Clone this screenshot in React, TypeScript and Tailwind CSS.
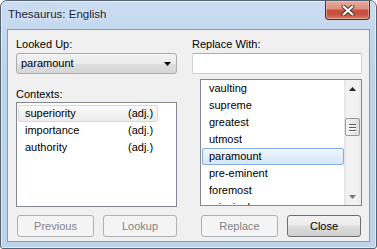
import React from "react";

function CloseButton() {
  return (
    <div className="flex h-[19px] w-[45px] items-center justify-center rounded-b-[4px] border border-t-0 border-[#5b2a22] bg-[linear-gradient(180deg,#e9ab9c_0%,#dc8f7c_45%,#c6503b_50%,#c8553f_75%,#d9826a_100%)] shadow-[inset_0_0_0_1px_rgba(255,210,200,0.45)]">
      <svg width="14" height="11" viewBox="0 0 14 11">
        <path d="M2.5 1.5 L11.5 9.5 M11.5 1.5 L2.5 9.5" stroke="#4a3030" strokeWidth="4" strokeLinecap="round" />
        <path d="M2.5 1.5 L11.5 9.5 M11.5 1.5 L2.5 9.5" stroke="#ffffff" strokeWidth="2.2" strokeLinecap="round" />
      </svg>
    </div>
  );
}

const rightItems = [
  "vaulting",
  "supreme",
  "greatest",
  "utmost",
  "paramount",
  "pre-eminent",
  "foremost",
  "principal",
];

const contexts = [
  ["superiority", "(adj.)"],
  ["importance", "(adj.)"],
  ["authority", "(adj.)"],
];

export default function App() {
  return (
    <div className="h-[249px] w-[377px] overflow-hidden font-['Liberation_Sans',Arial,sans-serif] text-[11px] leading-[13px] text-black">
      <div className="flex h-full w-full flex-col rounded-t-[7px] rounded-b-[3px] border border-[#55626f] bg-[linear-gradient(180deg,#cadcf1_0%,#bcd3ec_30%,#bed4ed_100%)] px-[6px] pb-[6px] shadow-[inset_0_0_0_1px_rgba(255,255,255,0.55)]">
        {/* title bar */}
        <div className="flex h-[28px] justify-between">
          <div className="pl-[1px] pt-[6px] text-[11.5px] leading-[14px] text-[#17233d] [text-shadow:0_0_6px_rgba(255,255,255,0.95)]">
            Thesaurus: English
          </div>
          <CloseButton />
        </div>

        {/* client area */}
        <div className="flex flex-1 border border-[#8d9aa9] bg-[#f0f0f0] pl-[8px] pr-[6px] pt-[8px]">
          {/* left column */}
          <div className="flex w-[161px] flex-col">
            <div className="h-[13px]">Looked Up:</div>
            <div className="mt-[2px] flex h-[21px] items-center justify-between rounded-[3px] border border-[#acacac] bg-[linear-gradient(180deg,#f2f2f2_0%,#ebebeb_50%,#dfdfdf_51%,#d6d6d6_100%)] pl-[4px] pr-[5px]">
              <span>paramount</span>
              <svg width="7" height="4" viewBox="0 0 7 4">
                <path d="M0 0 H7 L3.5 4 Z" fill="#000" />
              </svg>
            </div>
            <div className="mt-[14px] h-[13px]">Contexts:</div>
            <div className="mt-[1px] h-[105px] border border-[#828790] bg-white pt-[2px]">
              {contexts.map(([w, p], i) =>
                i === 0 ? (
                  <div
                    key={w}
                    className="ml-[1px] flex h-[17px] w-[140px] rounded-[2px] border border-[#d9d9d9] bg-[linear-gradient(180deg,#fafafa,#ececec)] pl-[6px] leading-[14px]"
                  >
                    <span className="w-[103px]">{w}</span>
                    <span>{p}</span>
                  </div>
                ) : (
                  <div key={w} className="ml-[1px] flex h-[17px] w-[140px] border border-transparent pl-[6px] leading-[14px]">
                    <span className="w-[103px]">{w}</span>
                    <span>{p}</span>
                  </div>
                )
              )}
            </div>
            <div className="mt-[8px] flex pl-[1px]">
              <div className="flex h-[22px] w-[77px] items-center justify-center rounded-[3px] border border-[#adb2b5] bg-[#f4f4f4] text-[#838383]">
                Previous
              </div>
              <div className="ml-[9px] flex h-[22px] w-[74px] items-center justify-center rounded-[3px] border border-[#adb2b5] bg-[#f4f4f4] text-[#838383]">
                Lookup
              </div>
            </div>
          </div>

          {/* right column */}
          <div className="ml-[15px] flex w-[170px] flex-col">
            <div className="h-[13px]">Replace With:</div>
            <div className="mt-[2px] h-[21px] rounded-[2px] border border-[#cdd1d7] border-t-[#abadb3] bg-white" />
            <div className="ml-[8px] mt-[5px] flex h-[127px] w-[162px] border border-[#828790] bg-white">
              <div className="w-[143px] overflow-hidden">
                {rightItems.map((w) =>
                  w === "paramount" ? (
                    <div
                      key={w}
                      className="ml-[1px] h-[17px] w-[142px] rounded-[2px] border border-[#84acdd] bg-[linear-gradient(180deg,#f1f7fe,#d5e6fb)] pl-[6px] leading-[14px]"
                    >
                      {w}
                    </div>
                  ) : (
                    <div key={w} className="ml-[1px] h-[17px] w-[142px] border border-transparent pl-[6px] leading-[14px]">
                      {w}
                    </div>
                  )
                )}
              </div>
              {/* scrollbar */}
              <div className="flex w-[17px] flex-col bg-[linear-gradient(90deg,#e4e4e4,#f2f2f2_20%,#f2f2f2_80%,#e8e8e8)]">
                <div className="flex h-[17px] items-center justify-center">
                  <svg width="7" height="4" viewBox="0 0 7 4">
                    <path d="M3.5 0 L7 4 H0 Z" fill="#222" />
                  </svg>
                </div>
                <div className="flex-1 pt-[21px]">
                  <div className="mx-auto flex h-[18px] w-[15px] flex-col items-center justify-center gap-[2px] rounded-[2px] border border-[#979797] bg-[linear-gradient(90deg,#f5f5f5,#e9e9e9_50%,#dcdcdc)]">
                    <div className="h-[1px] w-[7px] bg-[#5c5c5c] shadow-[0_1px_0_#fff]" />
                    <div className="h-[1px] w-[7px] bg-[#5c5c5c] shadow-[0_1px_0_#fff]" />
                    <div className="h-[1px] w-[7px] bg-[#5c5c5c] shadow-[0_1px_0_#fff]" />
                  </div>
                </div>
                <div className="flex h-[17px] items-center justify-center">
                  <svg width="7" height="4" viewBox="0 0 7 4">
                    <path d="M0 0 H7 L3.5 4 Z" fill="#777" />
                  </svg>
                </div>
              </div>
            </div>
            <div className="mt-[9px] flex pl-[9px]">
              <div className="flex h-[22px] w-[77px] items-center justify-center rounded-[3px] border border-[#adb2b5] bg-[#f4f4f4] text-[#838383]">
                Replace
              </div>
              <div className="ml-[9px] flex h-[22px] w-[74px] items-center justify-center rounded-[3px] border border-[#707070] bg-[linear-gradient(180deg,#f2f2f2_0%,#ebebeb_45%,#dddddd_50%,#cfcfcf_100%)]">
                Close
              </div>
            </div>
          </div>
        </div>
      </div>
    </div>
  );
}
